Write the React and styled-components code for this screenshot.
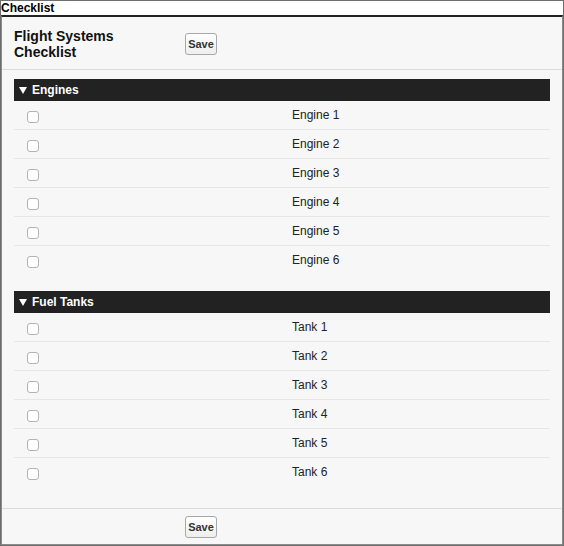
import React, { useState } from "react";
import styled, { createGlobalStyle } from "styled-components";

const sections = [
  { title: "Engines", items: ["Engine 1", "Engine 2", "Engine 3", "Engine 4", "Engine 5", "Engine 6"] },
  { title: "Fuel Tanks", items: ["Tank 1", "Tank 2", "Tank 3", "Tank 4", "Tank 5", "Tank 6"] },
];

const Section = ({ title, items }) => {
  const [checked, setChecked] = useState({});

  return (
    <SectionBox>
      <SectionBar>
        <Caret />
        <span>{title}</span>
      </SectionBar>
      {items.map((item, i) => (
        <Row key={item} last={i === items.length - 1}>
          <Cell>
            <Check
              type="checkbox"
              checked={!!checked[item]}
              onChange={() => setChecked(prev => ({ ...prev, [item]: !prev[item] }))}
            />
          </Cell>
          <Label>{item}</Label>
        </Row>
      ))}
    </SectionBox>
  );
};

const App = () => {
  return (
    <>
      <GlobalStyle />
      <Frame>
        <FrameTitle>Checklist</FrameTitle>
        <Panel>
          <Header>
            <Heading>Flight Systems Checklist</Heading>
            <SaveButton>Save</SaveButton>
          </Header>
          <Body>
            {sections.map(s => (
              <Section key={s.title} title={s.title} items={s.items} />
            ))}
          </Body>
          <Footer>
            <SaveButton>Save</SaveButton>
          </Footer>
        </Panel>
      </Frame>
    </>
  );
};

export default App;

const GlobalStyle = createGlobalStyle`
  * {
    box-sizing: border-box;
  }
  body {
    margin: 0;
    background: #ffffff;
    font-family: "Liberation Sans", Arial, sans-serif;
  }
`;

const Frame = styled.div`
  width: 564px;
  height: 546px;
  border: 1px solid #6e6e6e;
  display: flex;
  flex-direction: column;
  background: #ffffff;
`;

const FrameTitle = styled.div`
  font-size: 12px;
  font-weight: bold;
  line-height: 14px;
  height: 14px;
  color: #000;
`;

const Panel = styled.div`
  flex: 1;
  display: flex;
  flex-direction: column;
  background: #f7f7f7;
  border-top: 2px solid #222;
  border-left: 1px solid #8a8a8a;
  border-right: 1px solid #8a8a8a;
  border-bottom: 1px solid #8a8a8a;
`;

const Header = styled.div`
  display: flex;
  align-items: center;
  height: 53px;
  padding: 2px 12px 0;
  border-bottom: 1px solid #dcdcdc;
`;

const Heading = styled.h1`
  margin: 0;
  width: 171px;
  padding-right: 40px;
  font-size: 14px;
  line-height: 16px;
  font-weight: bold;
  color: #111;
`;

const SaveButton = styled.button`
  width: 32px;
  height: 22px;
  padding: 0;
  font-family: "Liberation Sans", Arial, sans-serif;
  font-size: 11px;
  font-weight: bold;
  color: #333;
  border: 1px solid #a8a8a8;
  border-radius: 3px;
  background: linear-gradient(#ffffff, #eeeeee);
  cursor: pointer;
`;

const Body = styled.div`
  flex: 1;
  padding: 9px 12px 0 12px;
  display: flex;
  flex-direction: column;
  gap: 16px;
`;

const SectionBox = styled.div`
  display: flex;
  flex-direction: column;
`;

const SectionBar = styled.div`
  display: flex;
  align-items: center;
  gap: 5px;
  height: 22px;
  padding-left: 5px;
  background: #222222;
  color: #ffffff;
  font-size: 12px;
  font-weight: bold;
`;

const Caret = styled.i`
  width: 0;
  height: 0;
  border-left: 4px solid transparent;
  border-right: 4px solid transparent;
  border-top: 7px solid #ffffff;
  margin-top: 1px;
`;

const Row = styled.div`
  display: grid;
  grid-template-columns: 1fr 1fr;
  align-items: center;
  height: 29px;
  border-bottom: 1px solid ${p => (p.last ? "transparent" : "#e6e6e6")};
`;

const Cell = styled.div`
  display: flex;
  align-items: center;
  padding-left: 13px;
  padding-top: 3px;
`;

const Check = styled.input`
  appearance: none;
  margin: 0;
  width: 12px;
  height: 12px;
  border: 1px solid #b3b3b3;
  border-radius: 3px;
  background: #ffffff;
  cursor: pointer;

  &:checked {
    background: #0075ff;
    border-color: #0075ff;
  }
`;

const Label = styled.div`
  padding-left: 10px;
  padding-bottom: 1px;
  font-size: 12px;
  color: #222;
`;

const Footer = styled.div`
  display: flex;
  align-items: center;
  height: 36px;
  padding: 0 0 0 183px;
  border-top: 1px solid #dcdcdc;
`;
